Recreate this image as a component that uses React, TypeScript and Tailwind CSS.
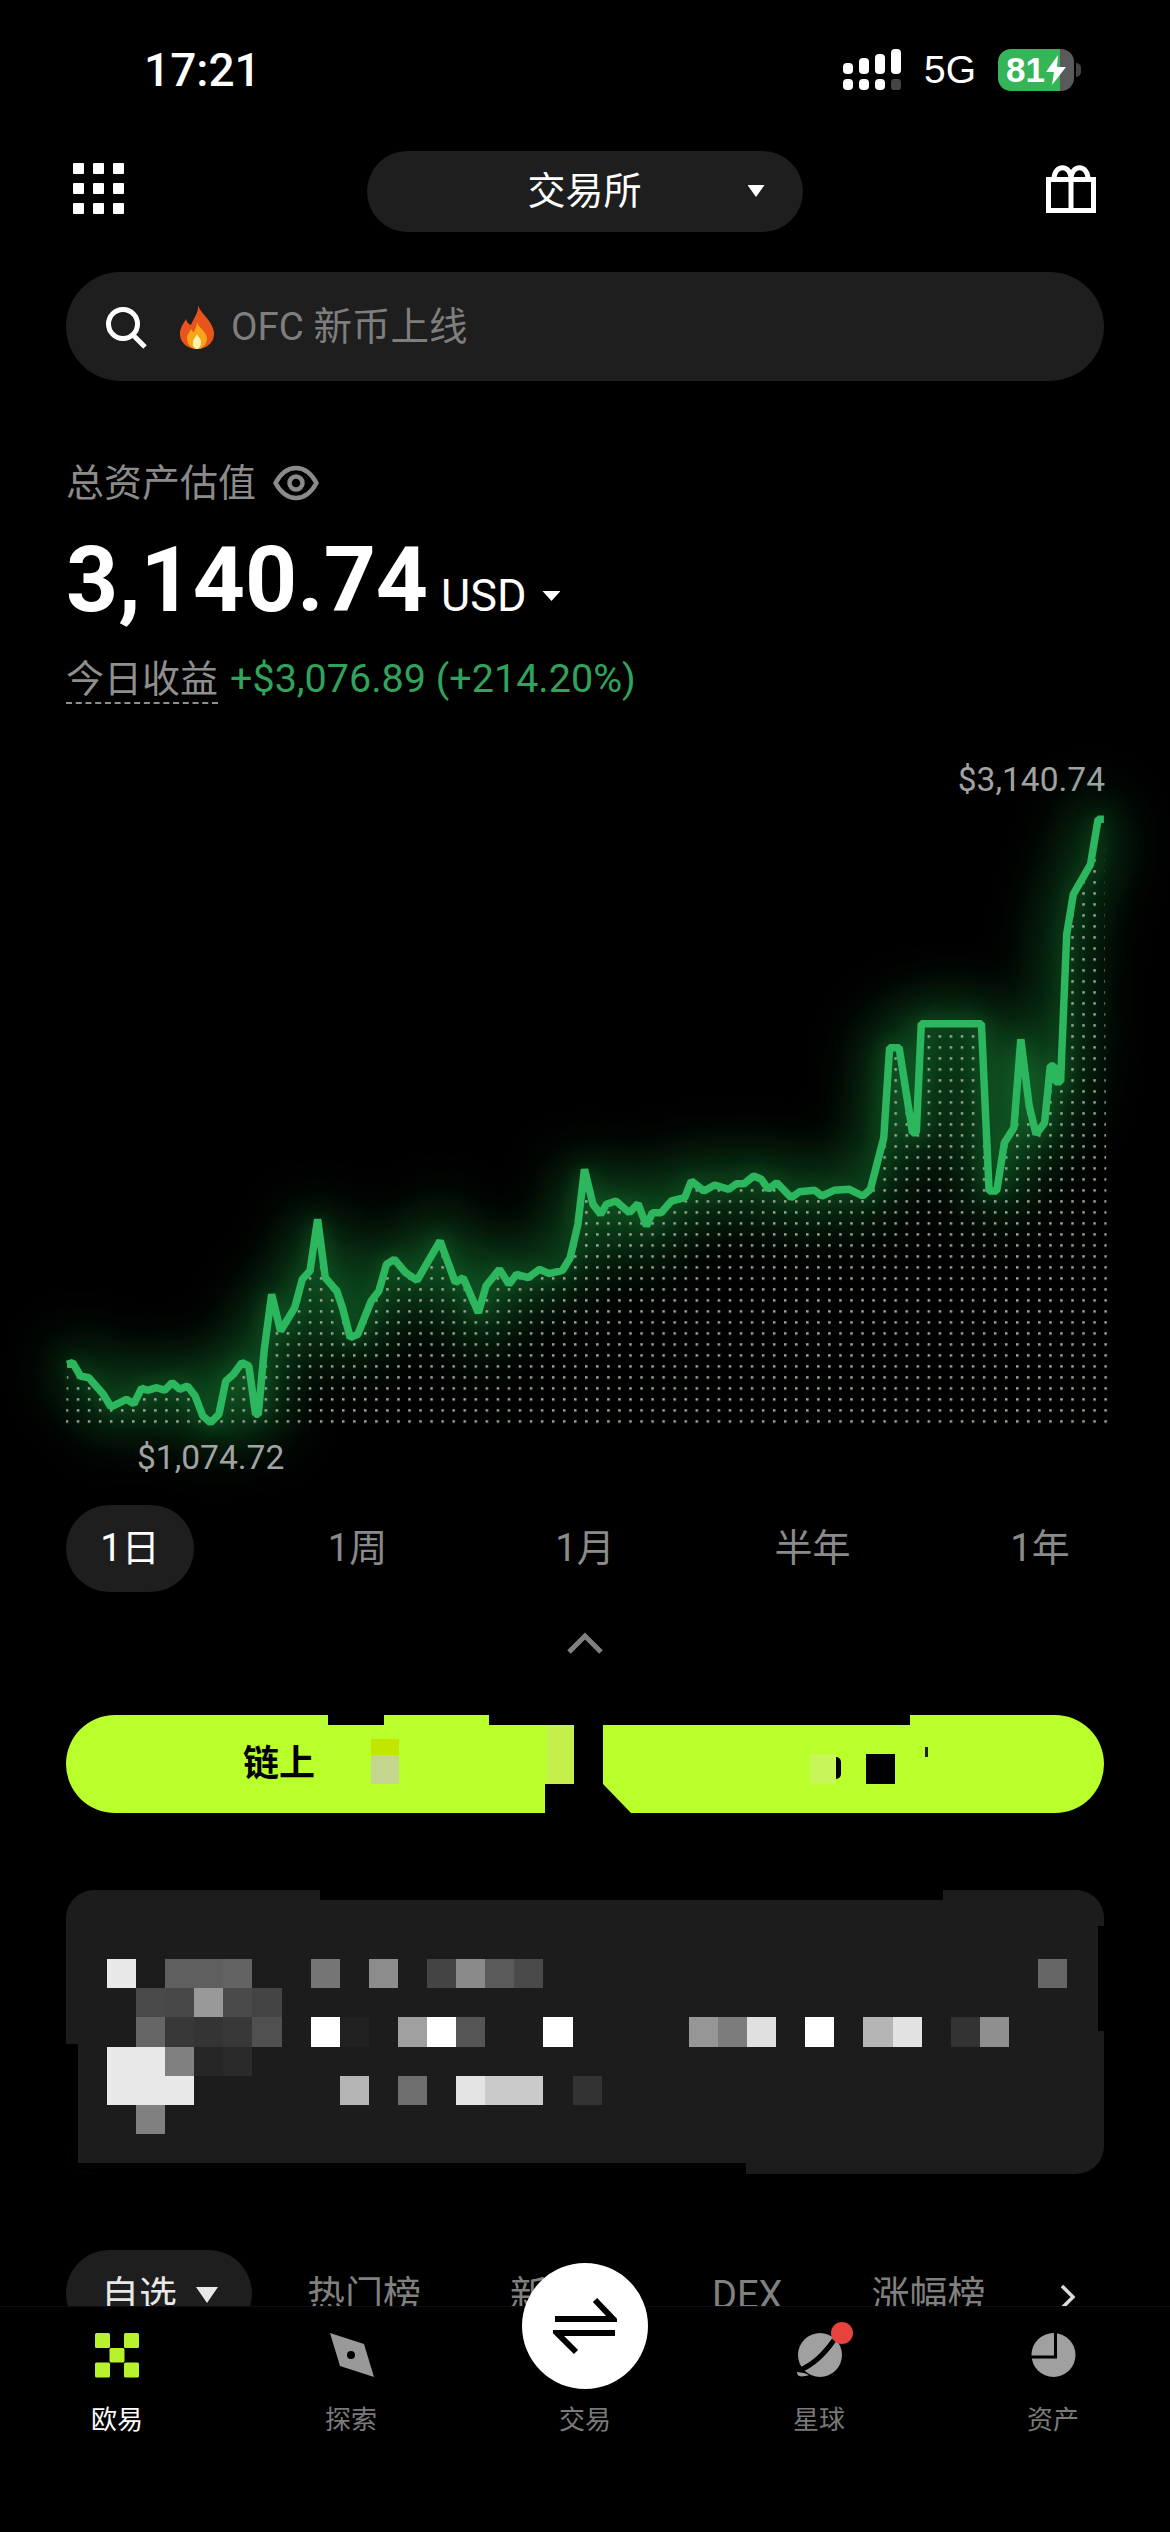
// OKX style wallet home - exchange tab with asset chart
const FONT = "[font-family:Roboto,'Noto_Sans_CJK_SC',sans-serif]";

// chart points read off the picture, left half and right half
const leftPts = [
  [175, 790], [190, 785], [210, 825], [232, 830], [270, 880], [290, 918], [330, 895], [350, 908], [370, 862], [385, 868],
  [410, 860], [430, 868], [450, 845], [470, 865], [490, 855], [510, 885], [530, 945], [550, 965], [572, 940], [590, 840],
  [610, 820], [632, 785], [650, 795], [668, 940], [675, 940], [690, 750], [710, 580], [733, 690], [770, 620], [790, 535],
  [810, 510], [830, 355], [850, 530], [880, 570], [895, 620], [915, 710], [935, 700], [970, 600], [990, 570], [1010, 490],
  [1030, 475], [1060, 515], [1090, 538], [1150, 420], [1190, 545], [1210, 530], [1250, 635], [1270, 555], [1305, 505],
  [1330, 550], [1350, 520], [1380, 530], [1410, 505], [1435, 518], [1470, 508], [1490, 470], [1510, 370],
].map(([x, y]) => [x / 2.613, 1100 + y / 3]);

const rightPts = [
  [38, 1285], [60, 1390], [80, 1420], [95, 1390], [120, 1380], [155, 1415], [178, 1388], [200, 1455], [215, 1415], [238, 1415],
  [265, 1380], [300, 1370], [317, 1320], [350, 1350], [378, 1332], [415, 1345], [435, 1328], [455, 1328], [480, 1305], [500, 1315],
  [518, 1345], [540, 1325], [578, 1370], [600, 1352], [640, 1348], [658, 1365], [690, 1348], [730, 1345], [765, 1365], [785, 1345],
  [820, 1190], [835, 920], [860, 920], [895, 1175], [905, 1175], [918, 848], [1075, 848], [1095, 1350], [1115, 1350], [1135, 1205],
  [1160, 1160], [1178, 895], [1200, 1095], [1218, 1180], [1240, 1145], [1255, 975], [1265, 975], [1268, 1022], [1282, 1022],
  [1298, 580], [1315, 460], [1360, 370], [1380, 235], [1395, 235],
].map(([x, y]) => [570 + x / 2.613, 740 + y / 3]);

const linePts = [...leftPts, ...rightPts].map(([x, y]) => `${x.toFixed(1)},${y.toFixed(1)}`).join(' ');
const areaPts = `${linePts} 1108,1423 66,1423`;

// blurred card content, one entry per row: column -> colour
const mosaic: Record<number, string>[] = [
  { 0: '#e8e8e8', 2: '#5f5f5f', 3: '#5f5f5f', 4: '#636363', 7: '#757575', 9: '#8c8c8c', 11: '#444444', 12: '#8a8a8a', 13: '#5a5a5a', 14: '#4a4a4a', 32: '#666666' },
  { 1: '#4a4a4a', 2: '#484848', 3: '#999999', 4: '#4a4a4a', 5: '#444444' },
  { 1: '#666666', 2: '#383838', 3: '#343434', 4: '#383838', 5: '#505050', 7: '#ffffff', 8: '#212121', 10: '#a0a0a0', 11: '#ffffff', 12: '#555555', 15: '#ffffff', 20: '#969696', 21: '#7c7c7c', 22: '#e0e0e0', 24: '#ffffff', 26: '#b5b5b5', 27: '#e2e2e2', 29: '#333333', 30: '#8f8f8f' },
  { 0: '#e8e8e8', 1: '#e8e8e8', 2: '#808080', 3: '#262626', 4: '#2a2a2a' },
  { 0: '#e8e8e8', 1: '#e8e8e8', 2: '#e8e8e8', 8: '#b5b5b5', 10: '#6e6e6e', 12: '#e4e4e4', 13: '#cacaca', 14: '#cacaca', 16: '#333333' },
  { 1: '#808080' },
];

const ranges = ['1日', '1周', '1月', '半年', '1年'];

const StatusBar = () => (
  <div className="flex h-[42px] items-center pt-px">
    <span className="ml-[144px] text-[46px] leading-none font-medium text-white">17:21</span>
    <svg className="ml-auto" width="60" height="42" viewBox="0 0 60 42" fill="#fff">
      <rect x="1" y="14" width="10" height="11" rx="4" />
      <rect x="17" y="9" width="10" height="16" rx="4" />
      <rect x="33" y="5" width="10" height="20" rx="4" />
      <rect x="49" y="0" width="10" height="25" rx="4" />
      <rect x="1" y="30" width="10" height="11" rx="4" />
      <rect x="17" y="30" width="10" height="11" rx="4" />
      <rect x="33" y="30" width="10" height="11" rx="4" />
      <rect x="49" y="30" width="10" height="11" rx="3" fill="#444" />
    </svg>
    <span className="ml-[22px] text-[39px] leading-none text-white [font-family:'Liberation_Sans',sans-serif]">5G</span>
    <div className="relative ml-[22px] flex h-[42px] w-[76px] overflow-hidden rounded-[13px]">
      <div className="w-[62px] bg-[#35b557]" />
      <div className="flex-1 bg-[#5a5a5a]" />
      <span className="absolute top-[5px] left-[8px] text-[35px] leading-[32px] font-bold text-white [font-family:'Liberation_Sans',sans-serif]">81</span>
      <svg className="absolute top-[6px] left-[47px]" width="22" height="30" viewBox="0 0 22 30" fill="#fff">
        <path d="M13 0 1 17h8l-2 13 14-18h-9z" />
      </svg>
    </div>
    <div className="mr-[89px] ml-[2px] h-[14px] w-[5px] rounded-r-full bg-[#444]" />
  </div>
);

const TopNav = () => (
  <div className="mt-[61px] flex h-[81px] items-center justify-between pr-[73px] pl-[73px]">
    <div className="mb-[6px] grid w-[51px] grid-cols-3 gap-x-[9px] gap-y-[9px]">
      {Array.from({ length: 9 }).map((_, i) => (
        <div key={i} className="h-[11px] w-[11px] rounded-[1px] bg-white" />
      ))}
    </div>
    <div className="relative flex h-[81px] w-[436px] items-center justify-center rounded-full bg-[#1e1e1e] text-[38px] text-white">
      交易所
      <div className="absolute top-[34px] left-[381px] h-[12px] w-[17px] bg-white [clip-path:polygon(0_0,100%_0,50%_100%)]" />
    </div>
    <svg className="mb-[6px]" width="52" height="50" viewBox="0 0 52 50" fill="none" stroke="#fff" strokeWidth="5">
      <rect x="3.5" y="15.5" width="45" height="31" />
      <path d="M26 15v32M9 15c0-15 17-15 17 0M26 15c0-15 17-15 17 0" />
    </svg>
  </div>
);

const SearchBar = () => (
  <div className="mx-[66px] mt-[40px] flex h-[109px] items-center rounded-full bg-[#1e1e1e] pl-[38px]">
    <svg width="44" height="44" viewBox="0 0 44 44" fill="none" stroke="#fff" strokeWidth="5">
      <circle cx="19" cy="19" r="14.5" />
      <path d="m29 30 12 12" />
    </svg>
    <svg className="ml-[30px]" width="38" height="44" viewBox="0 0 38 44">
      <path d="M20 0c2 8 14 15 16 27 1 10-7 17-17 17S1 37 2 27c1-6 4-9 6-13 1 3 2 5 5 6 2-6 8-12 7-20z" fill="#e8541c" />
      <path d="M19 17c1 5 9 9 10 16 0 6-4 11-10 11S9 39 9 33c0-4 3-6 4-9 1 2 2 3 3 3 1-3 3-6 3-10z" fill="#f9a51a" />
      <path d="M19 29c1 3 4 4 4 8s-2 7-4 7-5-3-4-7c0-3 3-5 4-8z" fill="#fff3b0" />
    </svg>
    <span className="ml-[15px] text-[38.500px] text-[#7e7e7e]">OFC 新币上线</span>
  </div>
);

const AssetSummary = () => (
  <div className="ml-[66px]">
    <div className="mt-[83px] flex h-[38px] items-center text-[#8b8b8b]">
      <span className="text-[38px] leading-none">总资产估值</span>
      <svg className="ml-[17px]" width="46" height="36" viewBox="0 0 46 36" fill="none" stroke="#8b8b8b" strokeWidth="4.5">
        <path d="M2.5 18C8 8 14 3 23 3s15 5 20.500 15C38 28 32 33 23 33S8 28 2.500 18z" />
        <circle cx="23" cy="18" r="6.500" />
      </svg>
    </div>
    <div className="mt-[33px] flex h-[90px] items-baseline text-white">
      <span className="text-[91px] leading-[90px] font-bold">3,140.74</span>
      <span className="ml-[13px] text-[45px] leading-none">USD</span>
      <div className="ml-[16px] h-[10px] w-[18px] -translate-y-[10px] bg-white [clip-path:polygon(0_0,100%_0,50%_100%)]" />
    </div>
    <div className="mt-[31px] flex h-[48px] items-start text-[38px] leading-[46px]">
      <span className="border-b-2 border-dashed border-[#8f8f8f] text-[#8f8f8f]">今日收益</span>
      <span className="ml-[12px] text-[39.500px] text-[#2fa45a]">+$3,076.89 (+214.20%)</span>
    </div>
  </div>
);

const AssetChart = () => (
  <div>
    <div className="mt-[54px] mr-[65px] text-right text-[33.500px] leading-[43px] text-[#a3a3a3]">$3,140.74</div>
    <svg className="block h-[637px] w-[1170px] overflow-visible" viewBox="0 800 1170 637">
      <defs>
        <pattern id="dots" patternUnits="userSpaceOnUse" x="65.700" y="1419.200" width="11.050" height="11">
          <rect width="2.500" height="2.500" fill="#9aaa95" />
        </pattern>
        <filter id="wideGlow" filterUnits="userSpaceOnUse" x="-100" y="640" width="1400" height="950">
          <feGaussianBlur stdDeviation="28" />
        </filter>
        <filter id="nearGlow" filterUnits="userSpaceOnUse" x="-100" y="640" width="1400" height="950">
          <feGaussianBlur stdDeviation="10" />
        </filter>
      </defs>
      <polyline points={linePts} fill="none" stroke="#1b9a3e" strokeWidth="40" opacity="0.5" filter="url(#wideGlow)" />
      <polyline points={linePts} fill="none" stroke="#22b24c" strokeWidth="8" opacity="0.3" filter="url(#nearGlow)" />
      <polygon points={areaPts} fill="url(#dots)" />
      <polyline points={linePts} fill="none" stroke="#2cb65d" strokeWidth="7.500" strokeLinejoin="bevel" />
    </svg>
    <div className="ml-[137px] text-[33.500px] leading-[40px] text-[#a3a3a3]">$1,074.72</div>
  </div>
);

const RangeTabs = () => (
  <div className="mx-[66px] mt-[27px] flex h-[87px] items-center justify-between">
    {ranges.map((r, i) => (
      <div
        key={r}
        className={`flex h-[87px] w-[128px] items-center justify-center rounded-full text-[38px] ${i === 0 ? 'bg-[#1e1e1e] text-white' : 'text-[#8a8a8a]'}`}
      >
        {r}
      </div>
    ))}
  </div>
);

const ActionButtons = () => (
  <div className="mx-[66px] mt-[61px] flex h-[98px] justify-between">
    <div className="relative flex w-[508px] items-center overflow-hidden rounded-l-[49px] bg-[#b9ff2b] pl-[177px] text-[36px] font-bold text-black">
      链上
      <div className="absolute top-0 left-[262px] h-[10px] w-[56px] bg-black" />
      <div className="absolute top-0 left-[423px] h-[10px] w-[85px] bg-black" />
      <div className="absolute top-[24px] left-[305px] h-[16px] w-[28px] bg-[#c3e600]" />
      <div className="absolute top-[40px] left-[305px] h-[29px] w-[28px] bg-[#c4d58f]" />
      <div className="absolute top-[11px] left-[481px] h-[58px] w-[27px] bg-[#c5f04c]" />
      <div className="absolute top-[69px] left-[479px] h-[29px] w-[29px] bg-black" />
    </div>
    <div className="relative w-[501px] overflow-hidden rounded-r-[49px] bg-[#b9ff2b]">
      <div className="absolute top-0 left-0 h-[10px] w-[307px] bg-black" />
      <div className="absolute bottom-0 left-0 h-[29px] w-[28px] bg-black [clip-path:polygon(0_0,100%_100%,0_100%)]" />
      <div className="absolute top-[39px] left-[207px] h-[30px] w-[26px] bg-[#c8f55a]" />
      <div className="absolute top-[39px] left-[263px] h-[30px] w-[29px] bg-black" />
      <div className="absolute top-[42px] left-[233px] h-[22px] w-[5px] rounded-r-full bg-black" />
      <div className="absolute top-[32px] left-[322px] h-[10px] w-[3px] bg-[#222]" />
    </div>
  </div>
);

const BlurredCard = () => (
  <div className="relative mx-[66px] mt-[77px] h-[284px] overflow-hidden rounded-[28px] bg-[#1c1c1c] pt-[69px] pl-[41px]">
    <div className="absolute top-0 left-[254px] h-[10px] w-[623px] bg-black" />
    <div className="absolute bottom-0 left-0 h-[130px] w-[12px] bg-black" />
    <div className="absolute bottom-0 left-0 h-[11px] w-[680px] bg-black" />
    <div className="absolute top-[36px] right-0 h-[105px] w-[6px] bg-black" />
    {mosaic.map((row, r) => (
      <div key={r} className="relative flex h-[29.200px]">
        {Array.from({ length: 33 }).map((_, c) => (
          <div key={c} className="h-full w-[29.100px]" style={{ backgroundColor: row[c] ?? 'transparent' }} />
        ))}
      </div>
    ))}
  </div>
);

const MarketTabs = () => (
  <div className="mt-[76px] flex h-[56px] items-start overflow-hidden pl-[66px] text-[38px] leading-[91px] text-[#808080]">
    <div className="flex h-[87px] w-[186px] items-center rounded-[44px] bg-[#1e1e1e] pl-[35px] pt-[3px] text-[#e8e8e8]">
      自选
      <div className="ml-[19px] h-[16px] w-[22px] bg-[#e8e8e8] [clip-path:polygon(0_0,100%_0,50%_100%)]" />
    </div>
    <span className="ml-[55px]">热门榜</span>
    <span className="ml-[89px]">新币榜</span>
    <span className="ml-[88px]">DEX</span>
    <span className="ml-[89px]">涨幅榜</span>
    <svg className="mt-[34px] ml-[75px]" width="16" height="26" viewBox="0 0 16 26" fill="none" stroke="#dcdcdc" strokeWidth="3.500">
      <path d="m2 2 11 11L2 24" />
    </svg>
  </div>
);

const IconOkx = () => (
  <svg width="45" height="45" viewBox="0 0 45 45" fill="#b7f22d">
    <rect x="0" y="0" width="15" height="15" rx="1.500" />
    <rect x="29" y="0" width="15" height="15" rx="1.500" />
    <rect x="14.500" y="15" width="15" height="14.500" rx="1.500" />
    <rect x="0" y="29.500" width="15" height="15" rx="1.500" />
    <rect x="29" y="29.500" width="15" height="15" rx="1.500" />
  </svg>
);

const IconExplore = () => (
  <svg width="45" height="45" viewBox="0 0 45 45">
    <path d="M1 0 35 11l10 33-34-11z" fill="#999" />
    <circle cx="22" cy="22" r="4" fill="#000" />
  </svg>
);

const IconPlanet = () => (
  <svg className="overflow-visible" width="45" height="45" viewBox="0 0 45 45">
    <circle cx="23" cy="22" r="22" fill="#a0a0a0" />
    <path d="M37 7C28 20 18 31 3 37" fill="none" stroke="#000" strokeWidth="5" />
    <path d="M0 39c0 4 3 6 12 3l-5-2z" fill="#a0a0a0" />
    <circle cx="45" cy="0" r="11" fill="#e8423f" />
  </svg>
);

const IconAssets = () => (
  <svg width="45" height="45" viewBox="0 0 45 45">
    <circle cx="22.500" cy="22" r="22" fill="#a0a0a0" />
    <path d="M24.500 0v24H0" fill="none" stroke="#000" strokeWidth="3" />
  </svg>
);

const BottomNav = () => {
  const items = [
    { label: '欧易', icon: <IconOkx />, active: true },
    { label: '探索', icon: <IconExplore /> },
    { label: '交易', icon: <div className="h-[45px]" /> },
    { label: '星球', icon: <IconPlanet /> },
    { label: '资产', icon: <IconAssets /> },
  ];
  return (
    <div className="relative grid h-[227px] grid-cols-5 border-t border-[#0d0d18] bg-black pt-[26px]">
      {items.map((it) => (
        <div key={it.label} className="flex flex-col items-center">
          <div className="flex h-[45px] items-center justify-center">{it.icon}</div>
          <span className={`mt-[27px] text-[26px] leading-[30px] ${it.active ? 'text-white' : 'text-[#7a7a7a]'}`}>{it.label}</span>
        </div>
      ))}
      <div className="absolute top-[-44px] left-[522px] flex h-[126px] w-[126px] items-center justify-center rounded-full bg-white">
        <svg width="64" height="58" viewBox="0 0 64 58" fill="none" stroke="#000" strokeWidth="6">
          <path d="M2 22h58L42 3M62 36H4l19 19" />
        </svg>
      </div>
    </div>
  );
};

export default function App() {
  return (
    <div className={`h-[2532px] w-[1170px] overflow-hidden bg-black pt-[48px] ${FONT}`}>
      <StatusBar />
      <TopNav />
      <SearchBar />
      <AssetSummary />
      <AssetChart />
      <RangeTabs />
      <div className="mt-[40px] flex justify-center">
        <svg width="38" height="22" viewBox="0 0 38 22" fill="none" stroke="#808080" strokeWidth="5">
          <path d="m3 20 16-16 16 16" />
        </svg>
      </div>
      <ActionButtons />
      <BlurredCard />
      <MarketTabs />
      <BottomNav />
    </div>
  );
}
